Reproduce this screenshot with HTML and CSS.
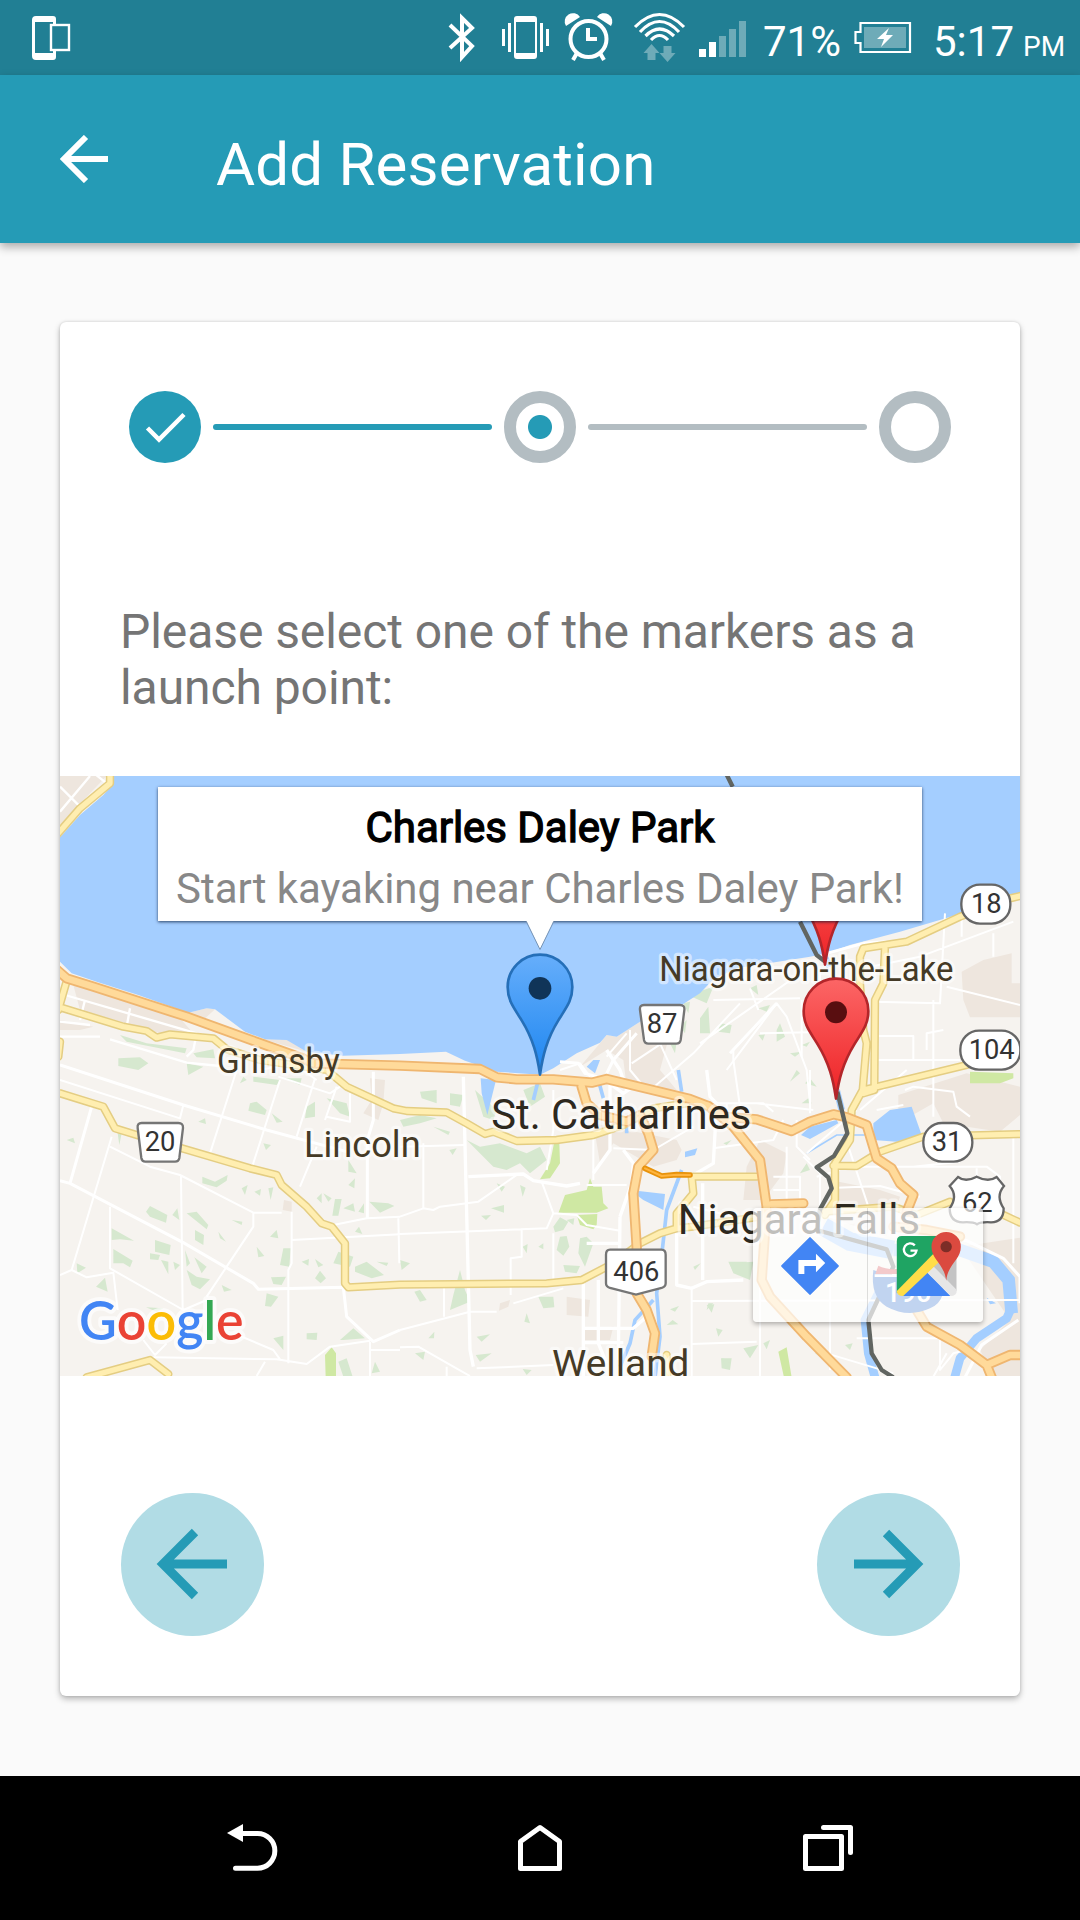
FILE: index.html
```html
<!DOCTYPE html>
<html lang="en">
<head>
<meta charset="utf-8">
<title>Add Reservation</title>
<link rel="stylesheet" href="styles.css">
</head>
<body>
<div class="statusbar">
  <svg class="notif" viewBox="0 0 80 75" width="80" height="75">
    <path fill="#fff" fill-rule="evenodd" d="M36 16h17q3 0 3 3v38q0 3-3 3H36q-4 0-4-4V20q0-4 4-4zM35 22v31h18V22z"/>
    <rect x="51" y="25" width="18" height="25" fill="#217f94" stroke="#fff" stroke-width="2.4"/>
  </svg>
  <svg class="indicators" viewBox="440 0 322 75" width="322" height="75" fill="none" stroke="#fff">
    <path stroke-width="4" d="M450 25l22 21-10 11V18l10 10-22 20"/>
    <path fill="#fff" stroke="none" fill-rule="evenodd" d="M517 16h17q3 0 3 3v37q0 3-3 3h-17q-3 0-3-3V19q0-3 3-3zM516 22v31h19V22z"/>
    <path stroke-width="3" d="M503.500 29v17M509.500 23v29M541.500 23v29M547.500 29v17"/>
    <circle cx="588.500" cy="39" r="18" stroke-width="4"/>
    <path fill="#fff" stroke="none" d="M566 26a8 8 0 0 1 14-9zM611 26a8 8 0 0 0-14-9z"/>
    <path stroke-width="4" d="M588 28v11h9M577 53l-4 7M600 53l4 7"/>
    <path stroke-width="3.200" d="M635 27Q659.500 2 684 27M640 32Q659.500 11 679 32M645.500 36Q659.500 22 674 36M651 40Q659.500 31 668 40"/>
    <g fill="#6eabb8" stroke="none">
      <path d="M651.500 44l8 9h-4v7h-8v-7h-4zM667.500 62l8-9h-4v-7h-8v7h-4z"/>
      <path d="M719 36h7v21h-7zM729 29h7v28h-7zM739 21h7v36h-7z"/>
      <path fill="#fff" d="M699 49h7v8h-7zM709 42h7v15h-7z"/>
    </g>
  </svg>
  <span class="percent">71%</span>
  <svg class="battery" viewBox="848 0 70 75" width="70" height="75">
    <path fill="none" stroke="#fff" stroke-width="2.200" d="M860.500 23h49.500v29h-49.500v-9h-5V32h5z"/>
    <path fill="#6eabb8" d="M864 27h42v21h-42z"/>
    <path fill="#fff" d="M889 28l-12 11h7l-3 8 12-12h-7z"/>
  </svg>
  <span class="clock">5:17<small>PM</small></span>
</div>
<header class="appbar">
  <svg viewBox="0 0 48 48" width="48" height="48"><path fill="none" stroke="#fff" stroke-width="6" d="M48 24H4M26 2L4 24l22 22"/></svg>
  <h1>Add Reservation</h1>
</header>
<main class="content">
  <section class="card">
    <div class="stepper">
      <span class="step done"><svg viewBox="0 0 72 72" width="72" height="72"><path fill="none" stroke="#fff" stroke-width="4.500" d="M18.500 37l11.500 11.500L55 23.500"/></svg></span>
      <span class="bar active"></span>
      <span class="step current"></span>
      <span class="bar"></span>
      <span class="step"></span>
    </div>
    <p class="prompt">Please select one of the markers as a launch point:</p>
    <div class="map">
      <svg class="tiles" viewBox="0 18 2880 1800" width="960" height="600">
        <defs>
          <linearGradient id="blue" x1="0" y1="0" x2="0" y2="1"><stop offset="0" stop-color="#66aefb"/><stop offset="1" stop-color="#1d86f0"/></linearGradient>
          <linearGradient id="red" x1="0" y1="0" x2="0" y2="1"><stop offset="0" stop-color="#fc6666"/><stop offset="1" stop-color="#ee2225"/></linearGradient>
          <path id="pin" stroke-width="8" stroke-linejoin="round" d="M0-4C-8-60-20-110-55-167C-80-207-97-227-97-267A97 97 0 0 1 97-267C97-227 80-207 55-167C20-110 8-60 0-4Z"/>
          <g id="arterial">
            <path d="M150 0V40L60 115L-10 195M0 712L190 770L260 783L290 803L330 793L460 805L500 838L600 870L800 900L860 950L1000 1015L1040 1023L1160 1027L1220 1060L1275 1092L1300 1085L1370 1113L1490 1110L1600 1095L1690 1065L1780 1015L1880 1000M-5 720L18 640M0 815L-5 860"/>
            <path d="M0 970L130 1010L165 1075L230 1095L570 1195L650 1215L665 1245L740 1310L785 1360L815 1370L855 1420V1540L865 1552L1020 1544L1460 1540L1565 1530L1660 1480L1740 1420L1800 1390L1850 1375L1900 1370L2100 1340M1895 1220L1900 1270L1850 1330V1375M1900 1220H2090M80 1822L270 1770L325 1812"/>
            <path d="M2890 376L2850 385L2700 440L2540 515L2410 535L2400 560V640L2410 780L2420 820L2408 960L2375 1020L2370 1110L2325 1180L2325 1290L2295 1335M2475 530L2470 640L2445 690L2443 960L2410 970M2410 960L2720 885M2320 1187L2390 1188L2460 1145L2590 1100L2890 1092M2295 1325L2500 1310L2570 1335L2670 1295M2820 1330L2880 1358M1820 1755L1822 1818"/>
          </g>
          <g id="highway">
            <path d="M-20 590L20 625L100 650L380 740L560 805L720 862L760 880L1020 887L1260 897L1310 922L1370 928L1480 928L1595 938L1640 927L1890 987L1945 1008L1990 1040L2090 1048L2195 1083L2250 1055L2320 1033L2360 1042L2420 1065L2450 1165L2495 1195L2520 1240L2560 1275L2540 1325M1945 1008L2020 1070L2100 1170L2120 1310L2105 1530L2130 1580L2240 1700L2360 1822M2135 1303L2230 1300M2500 1370L2600 1380L2700 1400M2570 1620L2600 1670L2700 1725L2780 1785L2850 1755H2890M2780 1785L2795 1822"/>
            <path d="M1565 950L1580 1000L1620 1035L1700 1055L1740 1035L1765 1090L1780 1140L1735 1190L1720 1270L1730 1430V1570L1760 1620L1785 1690L1775 1760"/>
          </g>
        </defs>
        <rect width="2880" height="1820" fill="#f6f3ef"/>

        <g fill="#eee6de">
          <path d="M0 18H140L90 70L0 165zM40 645L360 745L400 790L300 790L60 720zM0 750L100 770L60 780H0zM385 728L440 715L465 718L430 750zM610 808H680L740 845zM930 925L975 930L970 1000L955 1050L910 1030L935 990zM672 1290L695 1295V1325L668 1320z"/>
          <path d="M1740 755L1850 715L1800 900L1850 960L1700 950L1690 870L1640 840L1560 890L1620 820L1640 795L1670 800zM1600 1060L1850 1110L1865 1140L1850 1170L1780 1190L1660 1120L1620 1180L1610 1120zM1520 1580L1590 1590L1585 1640L1520 1635zM1570 1680L1660 1670L1650 1710H1570zM1320 1600L1350 1590L1345 1610L1317 1622z"/>
          <path d="M2705 605L2770 570L2855 550V640H2880V742H2730L2710 690zM2515 975L2720 910L2880 950V1035L2820 1085L2650 1060L2620 1000L2515 1060zM2100 1110L2180 1150L2170 1210L2110 1290L2050 1290L2060 1190zM2310 1230L2460 1260L2520 1280L2480 1400L2330 1350zM2700 1430L2900 1400V1818H2800L2760 1740L2850 1650zM2300 1270L2380 1260L2360 1310z"/>
        </g>

        <g fill="#d6e8cf">
          <path d="M180 795L260 820L380 835L375 850L200 815zM175 865L240 862L265 880L235 900L175 888zM400 850L460 838L465 865L410 862zM380 880L430 890L385 915zM570 1000L590 995L620 1020L615 1035L565 1022zM635 1030L668 1055L650 1058zM740 1010L765 995V1040L735 1045zM800 985L860 1000L870 1040L840 1030zM20 1110L40 1103L45 1120zM415 1055L435 1045L438 1062zM610 1120L633 1125L618 1140zM173 1090L185 1090L178 1125zM545 1255L563 1245L555 1275zM583 1265L603 1257L600 1277zM625 1255L640 1252L632 1290z"/>
          <path d="M427 1220L465 1235L503 1215L500 1232L470 1252L427 1240zM258 1325L270 1308L322 1335L318 1358L270 1340zM337 1335L352 1315L358 1350zM380 1330L410 1325L445 1365L440 1378zM405 1380L432 1395L430 1425L405 1410zM155 1375L222 1412L180 1408L155 1410zM160 1437L218 1472L210 1492L190 1480L160 1480zM285 1410L332 1425L328 1455L285 1445zM270 1450L300 1455L295 1470L270 1468zM303 1470L325 1475V1513zM340 1475L360 1485L345 1500zM375 1440L390 1480L380 1490zM403 1462L440 1490L425 1510zM380 1500L410 1520L450 1528L420 1558L395 1545zM475 1385L498 1415L480 1405zM515 1350L547 1355L545 1365zM630 1400L650 1380L655 1405zM590 1430L613 1458L595 1462zM670 1435L692 1435L688 1490L660 1485zM633 1522L678 1520L665 1545L640 1542zM765 1525L780 1502L798 1525L782 1540zM108 1550L135 1523L143 1565z"/>
          <path d="M50 1480L78 1493L52 1510zM725 1475L747 1467L745 1487zM765 1467L790 1485L775 1492zM820 1480L835 1445L880 1460L870 1490zM885 1490L920 1475L972 1515L935 1525L885 1505zM950 1475L985 1478L980 1488zM770 1285L785 1270V1300zM790 1270L815 1285L805 1295zM825 1287L845 1287L835 1337L817 1337zM850 1315L880 1300L885 1325zM895 1325L912 1300V1330zM928 1295L985 1300L1003 1308L960 1328zM865 1170L890 1210L865 1205zM865 1245L885 1225L883 1255zM885 1385L897 1370L907 1392zM620 1570L655 1580L633 1610L615 1608zM485 1545L515 1560L492 1565zM258 1612L310 1615L290 1625zM740 1690L772 1688L770 1710L740 1708zM640 1705L670 1697V1740zM840 1710L880 1675L915 1705L850 1710zM835 1775L860 1765L878 1820H850zM935 1810L945 1775L960 1805zM540 940L550 920L560 930zM580 920L660 930L650 945L580 935zM670 925L725 925L720 945z"/>
          <path d="M1080 965L1130 960V1000L1085 985zM1170 970L1210 975L1200 1010L1170 1005zM1020 1050L1080 1035L1130 1045L1080 1060L1030 1070zM1120 1070L1170 1085L1165 1095zM1220 1110L1260 1130L1320 1120L1400 1150L1440 1130L1460 1170L1410 1210L1380 1180L1340 1200L1300 1190zM1245 960L1310 1020L1300 1050L1270 1040zM1390 960L1440 940L1455 980L1410 1010zM1168 1140L1190 1135L1178 1155zM1310 1240L1335 1250L1325 1265zM1380 1245L1397 1253L1388 1280zM1293 1315L1332 1305V1328zM1263 1337L1293 1335L1278 1350zM1480 1370L1500 1342L1525 1355L1510 1380L1485 1387zM1520 1350L1543 1345L1540 1365zM1500 1400L1520 1398L1528 1430L1510 1457L1490 1440zM1560 1405L1580 1400L1600 1420L1575 1490L1555 1450zM1435 1430L1450 1420L1450 1438zM1388 1430L1403 1422L1400 1450zM1510 1485L1560 1488L1550 1510L1515 1505z"/>
          <path d="M1180 1575L1200 1500L1215 1560L1230 1595L1170 1620zM1063 1565L1080 1560L1100 1590L1080 1595zM1435 1580L1480 1580L1483 1612L1450 1615zM1393 1655L1400 1630L1410 1660zM1250 1700L1290 1693L1265 1715zM1105 1705L1123 1685L1122 1705zM1247 1755L1295 1750L1260 1775zM1065 1750L1095 1745L1090 1770zM1388 1797L1415 1800L1400 1815zM1983 1765L2015 1765L2010 1800L1985 1795zM1830 1618L1857 1608L1845 1625zM1940 1605L1963 1603L1955 1628zM1900 1490L1922 1480L1905 1500zM2005 1475H2060V1500L2020 1505zM1820 1665L1838 1650L1855 1663zM1968 1675L1988 1680L1975 1700zM1020 1470L1050 1480L1025 1500z"/>
          <path d="M1870 700L1890 695L1885 730zM1895 680L1930 660L1960 650L1940 700zM1920 745L1945 710L1950 790L1920 790zM1980 760L2015 765L2010 790L1975 785zM2070 655L2090 645L2095 675zM2095 715L2130 705L2120 725zM2150 780L2160 760L2175 800L2150 815zM2095 795L2115 793L2108 812zM2225 825L2250 815L2240 830zM2190 850L2225 845L2205 860zM1860 770L1880 750L1875 790zM1830 820L1850 815L1845 850zM2190 935L2210 900L2220 910zM2235 940L2250 925L2270 950zM2225 1000L2245 985L2255 1000zM2220 1210L2240 1180L2250 1200zM1990 1120L2015 1110L2000 1125zM2008 1480L2080 1475L2070 1530L2020 1510zM1940 1620L1945 1600L1960 1600zM2050 1735L2095 1725L2070 1765zM2110 1720L2130 1710L2120 1738zM2200 1680L2225 1670L2215 1690zM2265 1750L2285 1745L2280 1760zM2355 1725L2378 1720L2370 1740zM1985 1765L2010 1770L2000 1795z"/>
        </g>
        <g fill="#cfe8a3">
          <path d="M795 1755L815 1732L828 1750V1822H797zM1482 1120H1498L1500 1180L1470 1225L1440 1228L1470 1180zM1495 1330L1515 1275L1580 1260L1590 1225L1600 1250H1625L1630 1300L1645 1315L1610 1328H1550L1495 1328zM1550 1335L1612 1332L1610 1365L1600 1378L1560 1365zM2155 1745L2180 1732L2195 1822H2172zM2730 905L2860 910V925L2820 940H2730z"/>
        </g>

        <g fill="#a4ceff">
          <path d="M160 0V40L130 75L60 135L0 202V575L35 610L110 635L235 675L385 728L440 715L465 718L555 785L615 808L680 810L740 845L850 857L1020 852L1158 845L1215 872L1262 888L1310 905L1440 914L1480 895L1550 850L1620 818L1640 795L1670 800L1740 755L1850 715L1920 670L1960 628L2030 595L2250 560L2300 550L2370 525L2520 485L2690 435L2880 370V0z"/>
          <path d="M1262 925L1308 930L1282 1035L1265 970zM2440 1060L2490 1020L2555 1010L2585 1095L2510 1115L2440 1110zM2223 1095L2250 1070L2330 1050L2335 1060L2250 1107zM1710 1260L1815 1272L1810 1320L1750 1290zM1600 870H1620L1605 910L1580 890zM1875 1145L1912 1135L1905 1155L1875 1162zM2780 1583L2808 1600L2790 1603z"/>
        </g>
        <g fill="none" stroke="#a4ceff">
          <path stroke-width="11" d="M1435 930L1420 990M1615 930L1630 985M1855 900L1865 965M1700 1040V1090M1865 1200L1820 1320L1808 1430L1790 1570L1800 1700L1785 1822M1780 1590L1725 1650L1710 1720L1680 1790"/>
          <path stroke-width="5" d="M2240 1150L2330 1095H2440"/>
          <path stroke-width="20" d="M2290 555L2310 590M2330 960L2345 1020"/>
          <path stroke-width="56" d="M2290 1370L2370 1415L2500 1440"/>
          <path stroke-width="38" d="M2500 1440L2700 1440L2800 1475L2846 1530L2855 1630"/>
          <path stroke-width="26" d="M2856 1610L2840 1645L2750 1705L2700 1765L2684 1822M2460 1560L2415 1650L2425 1750L2445 1822"/>
        </g>

        <g fill="none" stroke="#fff" stroke-linejoin="round">
          <path stroke-width="7" d="M0 125L90 18M0 50L60 110M0 165L10 175M90 0L140 40M15 675L410 790L400 840L380 860M75 690L60 750M210 715L200 770M150 808L380 878L480 888M0 755L90 765M0 800L120 800"/>
          <path stroke-width="9" d="M0 885L370 1005L620 1080L860 1145M0 1232L30 1240L370 1418L580 1540L595 1558L850 1552L860 1640L940 1715L1020 1680M30 1240L95 1010M940 905L940 1050L922 1110V1345"/>
          <path stroke-width="6" d="M0 930L360 1045L370 1005M35 1500L155 1100M150 1130L270 1190L360 1215L580 1328H665M450 1150L530 900M575 1195L660 930M720 1250L770 1130M710 1100L765 925M363 1215L368 1620M150 1310V1495L370 1620L440 1590M580 1328V1370L500 1490L440 1580M0 1515L35 1500L80 1522L160 1508L173 1620M695 1325V1480L685 1500V1780M695 1410L1020 1393M820 1365L920 1345L1020 1340M280 1762L650 1768L740 1782L810 1730L930 1712M545 1700L640 1740L660 1768M250 1710L285 1755L320 1720M590 1818L615 1775M930 1715V1820M800 1040L870 1055V970M655 920L810 970L840 950M795 1050L830 950M930 1740H1020M600 900L700 880L770 930M1015 1345L1018 1480"/>
          <path stroke-width="10" d="M1210 920L1230 1740L1240 1790M1225 1220L1390 1212L1420 1232L1520 1248L1560 1240M1570 1540V1820M1615 1530V1720L1640 1780M1680 1340L1675 1770M1690 1140L1720 1180L1715 1240L1680 1340M1680 1420H1580M1565 1675H1720L1760 1640M1565 1718H1690M1650 940V1140L1600 1210M1850 1390V1545L1895 1555L1940 1535L2050 1530M1928 1240V1530M1940 900L1950 980L1970 1000L1960 1180L1900 1215M1620 920L1690 970L1720 950M1640 840L1680 900L1700 960"/>
          <path stroke-width="6" d="M1020 1130L1215 1125M1090 1120V1315M1020 1340L1090 1315L1120 1320L1140 1310L1255 1295L1370 1215M1020 1392L1460 1375L1480 1330L1445 1235M1385 1375V1460L1352 1465V1575M1480 1330L1550 1335L1580 1365L1680 1382M1480 1390V1530M1152 1550V1640M1020 1680L1230 1625H1310M1360 1600L1510 1555M1020 1732L1075 1730L1180 1790L1230 1818M1160 1790V1820M1250 1795L1480 1785M1480 960V1080L1460 1200M1600 1090V1230M1580 1245L1700 1245M1660 1135L1780 1140L1900 1070M1900 1310L2020 1340M1895 1550V1820M1895 1593L2880 1590M1895 1722L2090 1715M1590 920L1560 880L1500 900M1710 780V900L1760 960M1640 860L1700 790M1800 820L1850 930M1715 880L1850 790M1760 970L1900 850L2040 700M1920 820L2250 590M1960 690L2220 685M2070 655L2095 720M2000 900L2150 700L2180 740L2240 900L2250 1000"/>
          <path stroke-width="6" d="M2100 790L2320 785M2020 840V870L2040 1010M2280 610V690M2225 690V860M2430 590L2580 560L2860 455M2660 650L2880 705M2655 430L2640 700L2440 695M2705 450V500M2800 490V560M2440 798H2560V870M2620 690V1040M2440 870H2700M2600 840V790L2650 780M2535 960L2560 950L2680 965L2690 1010L2730 1040M2400 1020L2540 900M1960 1135L2140 1110L2170 1050M2090 1000L2260 1020M1920 1000H2110L2140 1025M2000 1000V1080M2140 1220H2220V1290M2140 1260H2220M2180 1130V1300M2230 1160L2280 1210V1310M2250 1170L2210 1130V1050M2240 1150L2390 1020M2365 1130L2425 1310M2330 1253L2460 1248L2580 1280M2390 1190H2560L2700 1175M2450 1190H2780L2820 1220V1280M2860 1100V1480M2450 1020L2530 1005M2750 1240V1195M2270 1220L2340 1200M2100 1420V1820M2310 1540V1800M2390 1705H2640V1800L2680 1750L2720 1740M2300 1750L2500 1810M2620 1820L2660 1750M2250 900V1030"/>
          <path stroke-width="9" d="M1500 875L1555 880L1575 910L1610 920M1640 910L1660 870L1730 790M2300 550L2410 520L2480 515M2010 850L2150 700M2540 1370L2720 1412L2830 1465L2880 1520V1600M2875 1650L2765 1725L2715 1822M2350 1350L2280 1330"/>
        </g>

        <g fill="none" stroke-linejoin="round" stroke-linecap="round">
          <use href="#arterial" stroke="#e4cd82" stroke-width="25"/>
          <use href="#arterial" stroke="#ffeeb0" stroke-width="16"/>
          <use href="#highway" stroke="#efb670" stroke-width="31"/>
          <use href="#highway" stroke="#ffda9a" stroke-width="20"/>
          <path stroke="#e8930c" stroke-width="17" d="M1755 1195L1805 1218L1850 1214L1890 1215"/>
          <path stroke="#ffb43e" stroke-width="6" d="M1755 1195L1805 1218L1850 1214L1890 1215"/>
        </g>
        <path fill="none" stroke="#616561" stroke-width="13" stroke-linejoin="round" d="M1998 10L2018 50M2220 455L2270 555L2295 575M2332 965L2362 1090L2322 1158L2270 1192L2305 1222L2315 1255L2280 1318L2270 1380L2480 1438L2500 1490L2425 1650L2435 1750L2465 1800L2500 1822"/>

        <g class="place">
          <text x="471" y="908" font-size="106" textLength="368" lengthAdjust="spacingAndGlyphs">Grimsby</text>
          <text x="732" y="1161" font-size="108" textLength="350" lengthAdjust="spacingAndGlyphs">Lincoln</text>
          <text x="1798" y="634" font-size="104" textLength="882" lengthAdjust="spacingAndGlyphs">Niagara-on-the-Lake</text>
          <text x="1476" y="1817" font-size="113" textLength="412" lengthAdjust="spacingAndGlyphs">Welland</text>
        </g>
        <g class="place city">
          <text x="1294" y="1076" font-size="128" textLength="780" lengthAdjust="spacingAndGlyphs">St. Catharines</text>
          <text x="1853" y="1391" font-size="129" textLength="727" lengthAdjust="spacingAndGlyphs">Niagara Falls</text>
        </g>

        <g class="shield" stroke="#757575">
          <path d="M245 1059H355Q370 1059 369 1074L358 1164Q356 1175 345 1175H256Q246 1175 244 1164L233 1074Q231 1059 245 1059z"/>
          <path d="M1752 705H1860Q1875 705 1873 720L1862 810Q1860 821 1849 821H1765Q1754 821 1752 810L1740 720Q1738 705 1752 705z"/>
          <path d="M1650 1439H1804Q1817 1439 1817 1454V1540Q1817 1550 1805 1554L1728 1574L1650 1554Q1638 1550 1638 1540V1454Q1638 1439 1650 1439z"/>
        </g>
        <g class="shield" stroke="#666">
          <rect x="2704" y="344" width="147" height="117" rx="56"/>
          <rect x="2701" y="782" width="180" height="117" rx="56"/>
          <rect x="2590" y="1059" width="147" height="116" rx="56"/>
          <path d="M2694 1221Q2717 1238 2750 1220Q2785 1238 2810 1221L2832 1248Q2806 1278 2831 1315Q2831 1357 2793 1357Q2763 1355 2751 1363Q2739 1355 2709 1357Q2669 1357 2669 1315Q2695 1278 2669 1248z"/>
        </g>
        <g>
          <path fill="#2f6fcc" d="M2440 1500Q2545 1540 2640 1500Q2670 1590 2610 1615Q2545 1645 2480 1610Q2430 1580 2440 1500z"/>
          <path fill="#d84f52" d="M2455 1487Q2490 1505 2545 1492Q2600 1505 2640 1487L2645 1512H2446z"/>
          <path stroke="#fff" stroke-width="8" d="M2444 1517H2650"/>
          <text class="interstate" x="2545" y="1595" font-size="82">190</text>
        </g>
        <g class="route">
          <text x="300" y="1144">20</text><text x="1806" y="790">87</text><text x="1729" y="1533">406</text>
          <text x="2779" y="430">18</text><text x="2795" y="867">104</text><text x="2661" y="1144">31</text><text x="2752" y="1326">62</text>
        </g>

        <g class="logo">
          <text x="57" y="1711" textLength="494" lengthAdjust="spacingAndGlyphs"><tspan fill="#4285f4">G</tspan><tspan fill="#ea4335">o</tspan><tspan fill="#fbbc05">o</tspan><tspan fill="#4285f4">g</tspan><tspan fill="#34a853">l</tspan><tspan fill="#ea4335">e</tspan></text>
        </g>

        <use href="#pin" x="2295" y="588" fill="url(#red)" stroke="#b3262a"/>
        <g><use href="#pin" x="2328" y="990" fill="url(#red)" stroke="#b3262a"/><circle cx="2328" cy="727" r="33" fill="#590e10"/></g>
        <g><use href="#pin" x="1440" y="918" fill="url(#blue)" stroke="#256fb8"/><circle cx="1440" cy="655" r="34" fill="#103458"/></g>
      </svg>
      <div class="infowindow">
        <strong>Charles Daley Park</strong>
        <span>Start kayaking near Charles Daley Park!</span>
        <svg class="tip" viewBox="0 0 30 30" width="30" height="30"><path fill="#fff" d="M1 0h28L15 29.500z"/><path fill="none" stroke="#7793b3" stroke-width="1" d="M1.500 2L15 29.500 28.500 2"/></svg>
      </div>
      <div class="toolbar">
        <svg viewBox="158 444 347 342" width="115" height="114">
          <path fill="#4285f4" stroke="#4285f4" stroke-width="6" stroke-linejoin="round" d="M330 534l84 84-84 84-84-84z"/>
          <path fill="#fff" d="M295 642v-42h53v-19l28 28-28 28v-19h-35v24z"/>
        </svg>
        <svg viewBox="505 444 344 342" width="115" height="114">
          <path fill="#c4c4c4" d="M770 540V693L690 620z"/>
          <path fill="#1fa463" d="M606 528H710L760 560L591 700V543Q591 528 606 528z"/>
          <path fill="#4285f4" d="M681 635L752 708H606z"/>
          <path fill="#e6e6e6" d="M700 618L771 690Q771 708 752 708L681 637z"/>
          <path fill="#ffdd48" d="M700 582L724 600L610 708Q591 708 591 693z"/>
          <path fill="#db4a3f" d="M739 662C733 610 695 600 695 560A44 44 0 0 1 783 560C783 600 745 610 739 662z"/>
          <circle cx="739" cy="560" r="17" fill="#7d2d27"/>
          <path fill="none" stroke="#fff" stroke-width="7" d="M645 556A19 19 0 1 0 650 572H632"/>
        </svg>
      </div>
    </div>
    <div class="actions">
      <button type="button" aria-label="Previous"><svg viewBox="0 0 72 72" width="72" height="72"><path d="M71 36H7M39 4L7 36l32 32"/></svg></button>
      <button type="button" aria-label="Next"><svg viewBox="0 0 72 72" width="72" height="72"><path d="M2 36h63M34 5l31 31-31 31"/></svg></button>
    </div>
  </section>
</main>
<nav class="navbar">
  <svg viewBox="222 1820 60 56" width="60" height="56"><path fill="#fff" d="M227 1833l16-9v18z"/><path d="M242 1833.500h15.500a17.300 17.300 0 0 1 0 34.700h-22"/></svg>
  <svg viewBox="510 1820 60 56" width="60" height="56"><path d="M520.500 1868.500v-27l19.500-14 19.500 14v27z"/></svg>
  <svg viewBox="798 1820 60 56" width="60" height="56"><path d="M805.500 1836.500h36v32h-36zM823.500 1827.500h27v25"/></svg>
</nav>
</body>
</html>
```
FILE: styles.css
```css
* { box-sizing: border-box; }
body {
  margin: 0;
  width: 1080px;
  height: 1920px;
  display: flex;
  flex-direction: column;
  background: #fafafa;
  font-family: Roboto, "Liberation Sans", sans-serif;
  overflow: hidden;
}
svg { display: block; flex: none; }

.statusbar {
  height: 75px;
  display: flex;
  background: #217f94;
  color: #fff;
  font-size: 42px;
  line-height: 49px;
  white-space: nowrap;
}
.indicators { margin-left: 360px; }
.percent { width: 86px; padding: 17px 0 0 1px; }
.clock { padding: 17px 0 0 15px; }
.clock small { font-size: 28px; margin-left: 9px; }

.appbar {
  height: 168px;
  display: flex;
  align-items: center;
  gap: 108px;
  padding-left: 60px;
  background: #259bb6;
  color: #fff;
  box-shadow: 0 4px 9px rgba(0, 0, 0, .32);
  position: relative;
}
.appbar h1 {
  margin: 0;
  padding-top: 12px;
  font-size: 60px;
  font-weight: 400;
  line-height: 70px;
  letter-spacing: .17px;
}

.content { flex: 1; padding: 79px 60px 80px; }
.card {
  height: 1374px;
  display: flex;
  flex-direction: column;
  background: #fff;
  border-radius: 6px;
  box-shadow: 0 3px 6px rgba(0, 0, 0, .27), 0 0 3px rgba(0, 0, 0, .14);
}

.stepper {
  display: flex;
  align-items: center;
  gap: 12px;
  padding: 69px 69px 0;
}
.step {
  flex: none;
  width: 72px;
  height: 72px;
  border: 12px solid #b3bdc2;
  border-radius: 50%;
}
.step.done { border: 0; background: #259bb6; }
.step.current { background: radial-gradient(circle, #259bb6 11.5px, #fff 12.5px); background-clip: padding-box; }
.bar { flex: 1; height: 6px; border-radius: 3px; background: #b3bdc2; }
.bar.active { background: #259bb6; }

.prompt {
  height: 112px;
  margin: 141px 60px 60px;
  color: #757575;
  font-size: 48px;
  line-height: 56px;
  letter-spacing: -.07px;
}

.map { position: relative; height: 600px; overflow: hidden; flex: none; }
.place text { fill: #453a26; stroke: rgba(255, 255, 255, .5); stroke-width: 20px; paint-order: stroke; stroke-linejoin: round; }
.place.city text { fill: #2e291f; }
.shield { fill: #fff; stroke-width: 7px; }
.route text { font-size: 82px; fill: #333; text-anchor: middle; }
.interstate { fill: #fff; text-anchor: middle; font-weight: 500; }
.logo text { font-family: Lato, sans-serif; font-size: 162px; font-weight: 600; stroke: rgba(255, 255, 255, .65); stroke-width: 24px; paint-order: stroke; stroke-linejoin: round; }

.infowindow {
  position: absolute;
  left: 98px;
  top: 11px;
  width: 764px;
  height: 134px;
  padding-top: 16px;
  display: flex;
  flex-direction: column;
  align-items: center;
  gap: 12px;
  background: #fff;
  box-shadow: 0 1px 3px rgba(0, 20, 50, .75);
  font-size: 42px;
  line-height: 49px;
  letter-spacing: -.04px;
  white-space: nowrap;
}
.infowindow strong { color: #000; font-weight: 400; -webkit-text-stroke: 1.3px #000; }
.infowindow span { color: #888; }
.infowindow .tip { position: absolute; left: 367px; top: 133px; }

.toolbar {
  position: absolute;
  left: 693px;
  top: 432px;
  width: 230px;
  height: 114px;
  display: flex;
  border-radius: 4px;
  background: rgba(255, 255, 255, .7);
  box-shadow: 0 2px 5px rgba(0, 0, 0, .3);
}
.toolbar svg + svg { box-shadow: -1px 0 0 rgba(0, 0, 0, .12); }

.actions { display: flex; justify-content: space-between; padding: 116.5px 60.5px 0; }
.actions button {
  width: 143px;
  height: 143px;
  padding: 0;
  border: 0;
  border-radius: 50%;
  display: grid;
  place-items: center;
  background: #b1dce5;
}
.actions path { fill: none; stroke: #259bb6; stroke-width: 9px; }

.navbar {
  height: 144px;
  display: flex;
  gap: 228px;
  padding: 44px 0 0 222px;
  background: #000;
}
.navbar path { stroke: #fff; stroke-width: 5px; stroke-linecap: round; stroke-linejoin: round; fill: none; }
.navbar path[fill] { fill: #fff; stroke-width: 0; }
```
